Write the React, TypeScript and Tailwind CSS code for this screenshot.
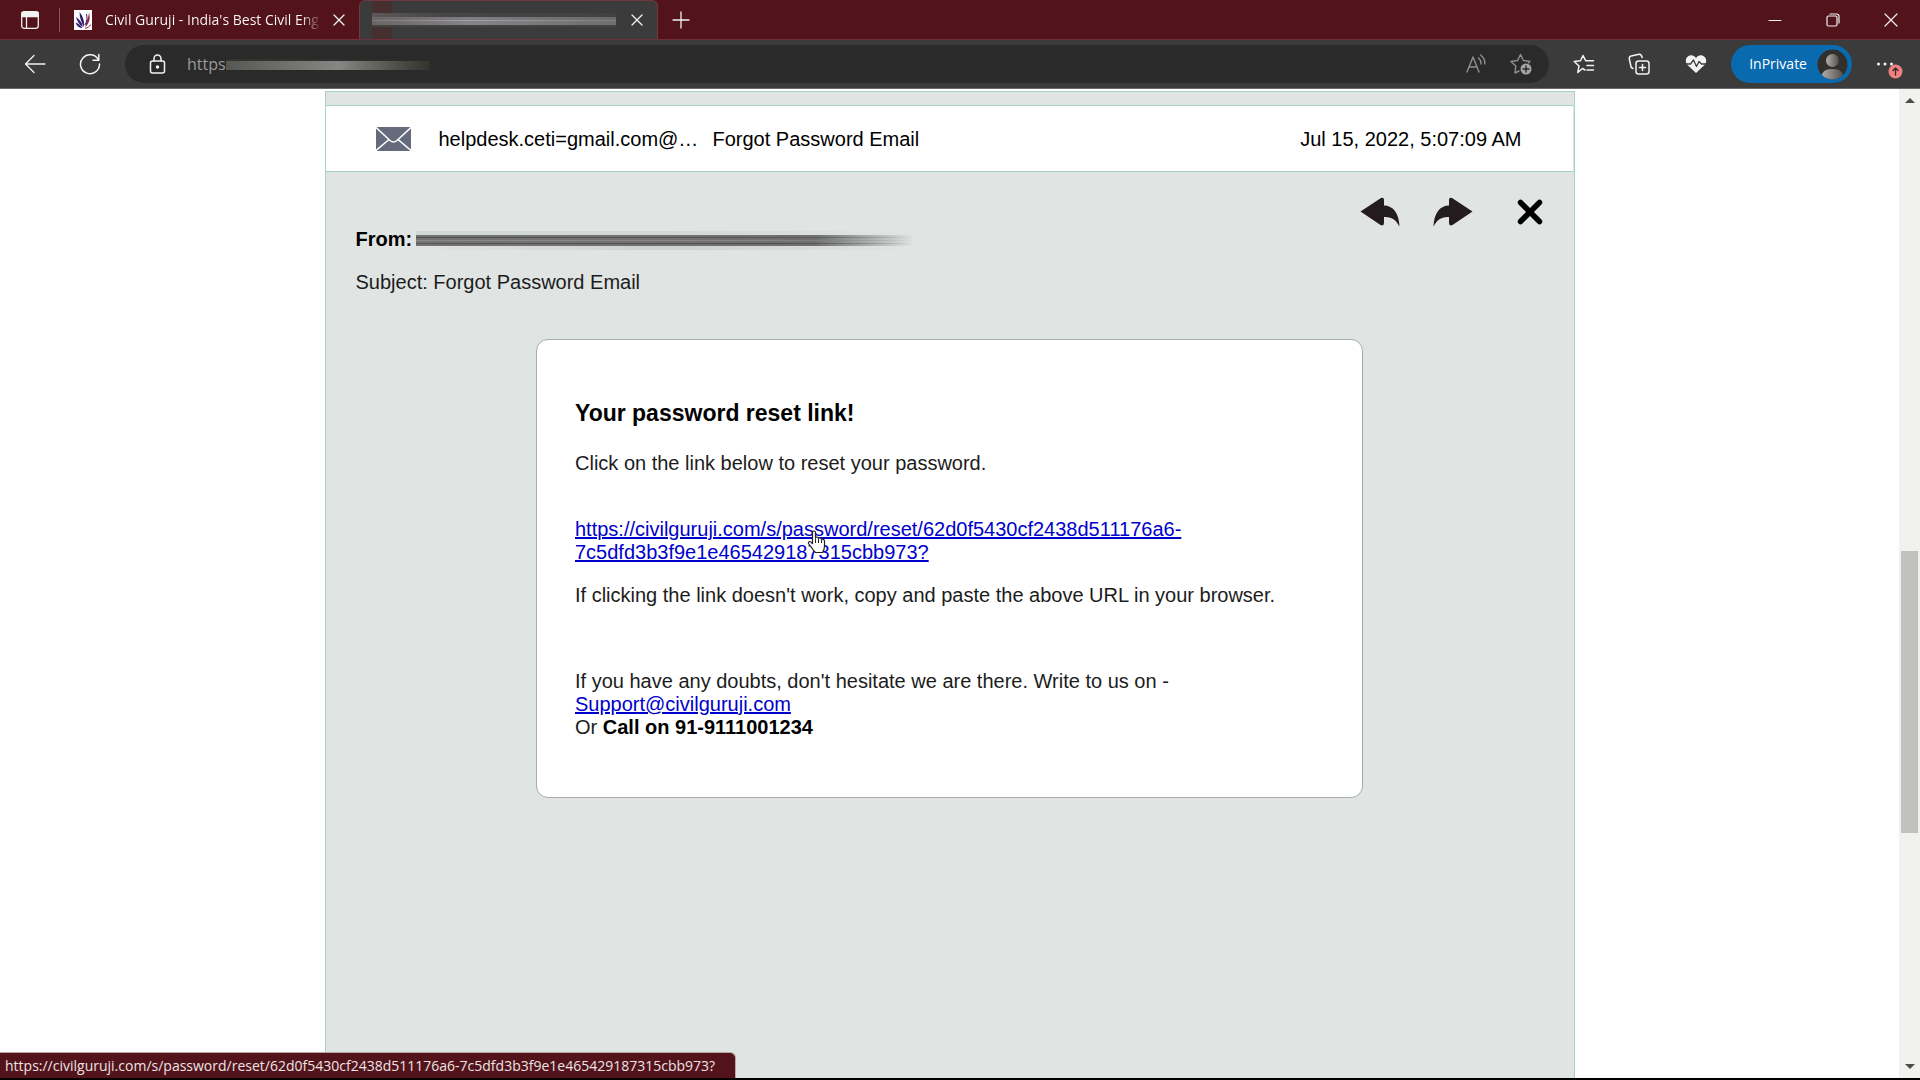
import type { ReactNode } from "react";

const RESET_URL =
  "https://civilguruji.com/s/password/reset/62d0f5430cf2438d511176a6-7c5dfd3b3f9e1e465429187315cbb973?";

type IconProps = {
  w?: number;
  h?: number;
  stroke?: string;
  width?: number;
  children: ReactNode;
};

function Icon({ w = 20, h = 20, stroke = "#f2f2f2", width = 1.3, children }: IconProps) {
  return (
    <svg
      width={w}
      height={h}
      viewBox={`0 0 ${w} ${h}`}
      fill="none"
      stroke={stroke}
      strokeWidth={width}
      strokeLinecap="round"
      strokeLinejoin="round"
      className="shrink-0"
      aria-hidden="true"
    >
      {children}
    </svg>
  );
}

function CloseIcon() {
  return (
    <Icon w={12} h={12}>
      <path d="M1 1L11 11M11 1L1 11" />
    </Icon>
  );
}

function TabBar() {
  return (
    <div className="flex h-[39px] items-stretch bg-[#53131b] text-white">
      <div className="flex min-w-0 items-center pl-5">
        <button aria-label="Tab actions">
          <Icon>
            <rect x="1.7" y="1.7" width="16.6" height="16.6" rx="2.5" />
            <path d="M2 2.5H18V6.5H2Z" fill="#f2f2f2" />
            <path d="M6.5 7V18" />
          </Icon>
        </button>
        <span className="ml-[19px] h-6 w-px bg-[#8b5a60]" />
        <svg width="18" height="20" viewBox="0 0 18 20" className="ml-3.5 shrink-0" fill="none" aria-hidden="true">
          <path d="M0 0H18V20H0Z" fill="#fff" />
          <path d="M5.500 2C8.500 6 10.500 10 10 17C7.500 12 5.500 8 5.500 2Z" fill="#2b1c66" />
          <path d="M2 7C5 9 8 12 9 17C5 15 3 11 2 7Z" fill="#3a1d74" />
          <path d="M1.500 12.500C4 13.500 6.500 15 8.500 18C5 18 2.500 16 1.500 12.500Z" fill="#3a1d74" />
          <path d="M15 2.500C16.500 8 15.500 13 11.500 17C11.500 12 14.500 9 15 2.500Z" fill="#8c2340" />
          <path d="M12.500 4C13.500 8 13 12 10.800 15" stroke="#49206e" strokeWidth="1" />
          <path d="M11 18.300C13.500 18 15.500 17 16.500 14.500" stroke="#8c2340" strokeWidth="1" />
        </svg>
        <span className="ml-[13px] w-[228px] bg-linear-to-r from-white from-86% to-transparent to-95% bg-clip-text text-sm whitespace-nowrap text-transparent">
          Civil Guruji - India's Best Civil Eng
        </span>
        <button aria-label="Close tab">
          <CloseIcon />
        </button>
      </div>

      <div className="ml-3.5 flex w-[299px] items-center rounded-t-md border-x border-t border-[#713840] bg-[#3b3b3b] pl-3">
        <span className="h-full w-5 bg-[#452f31]" />
        <span className="-ml-5 flex w-[244px] flex-col">
          <span className="h-1 bg-linear-to-r from-[#5c5759] via-[#474546] via-30% to-[#414141]" />
          <span className="h-[3px] bg-linear-to-r from-[#6a6566] via-[#7f7e82] via-40% to-[#6a6a69]" />
          <span className="h-px bg-linear-to-r from-[#7d797a] via-[#a3a2a5] via-40% to-[#80807f]" />
          <span className="h-1 bg-linear-to-r from-[#6a6566] via-[#858488] via-40% to-[#6e6e6d]" />
          <span className="h-0.5 bg-[#444241]" />
        </span>
        <button aria-label="Close tab" className="ml-[15px]">
          <CloseIcon />
        </button>
      </div>
      <button aria-label="New tab" className="ml-3.5">
        <Icon w={18} h={18}>
          <path d="M9 1V17M1 9H17" />
        </Icon>
      </button>

      <div className="ml-auto flex items-center gap-11 pr-[22px]">
        <button aria-label="Minimise">
          <Icon w={14} h={14} width={1}>
            <path d="M1 7.5H13" />
          </Icon>
        </button>
        <button aria-label="Restore">
          <Icon w={14} h={14} width={1.2}>
            <rect x="1" y="3" width="10" height="10" rx="1.5" />
            <path d="M4 1H10.500Q13 1 13 3.500V10" />
          </Icon>
        </button>
        <button aria-label="Close window">
          <Icon w={14} h={14} width={1.2}>
            <path d="M1 1L13 13M13 1L1 13" />
          </Icon>
        </button>
      </div>
    </div>
  );
}

function Toolbar() {
  return (
    <div className="flex h-[50px] items-center border-t border-b border-t-[#6d3038] border-b-[#6a6a6a] bg-[#3b3b3b] pr-[17px] pl-6">
      <button aria-label="Back">
        <Icon w={22}>
          <path d="M21 10H1.500M10 1.500L1.500 10L10 18.500" />
        </Icon>
      </button>
      <button aria-label="Refresh" className="ml-[33px]">
        <Icon w={22} h={22} width={1.5}>
          <path d="M19.500 7A9.500 9.500 0 1 0 20.500 11" />
          <path d="M19.800 1.500V7.200H14" />
        </Icon>
      </button>

      <div className="ml-6 flex h-[38px] flex-1 items-center rounded-full bg-[#2a2a2a] pr-[17px] pl-6">
        <Icon w={17} h={20} width={1.5}>
          <rect x="1.500" y="7" width="14" height="12" rx="2" />
          <path d="M5 7V4.500A3.500 3.500 0 0 1 12 4.500V7" />
          <circle cx="8.500" cy="13" r="1" fill="#f2f2f2" />
        </Icon>
        <input
          aria-label="Address"
          defaultValue="https"
          className="ml-[21px] w-[39px] bg-transparent text-base text-[#9a9a9a] outline-none"
        />
        <span className="flex w-[204px] flex-col">
          <span className="h-0.5 bg-linear-to-r from-[#34342f] to-[#2a2a2a]" />
          <span className="h-[9px] bg-linear-to-r from-[#575754] via-[#868784] via-55% to-[#33322d]" />
        </span>
        <button aria-label="Read aloud" className="ml-auto">
          <Icon w={20} stroke="#8f8f8f" width={1.4}>
            <path d="M1 18L7 3L13 18M3 13H11" />
            <path d="M12.500 4A7 7 0 0 1 15 10M14.500 1A10 10 0 0 1 18.800 10" />
          </Icon>
        </button>
        <button aria-label="Add to favourites" className="ml-6">
          <Icon w={22} h={22} stroke="#8f8f8f" width={1.4}>
            <path d="M9 18L5 20L5.800 13L1 8.500L7.500 7.500L10.500 1.500L13.500 7.500L20 8.500L18.500 10" />
            <circle cx="16" cy="16" r="5.500" fill="#a5a5a5" stroke="none" />
            <path d="M16 13V19M13 16H19" stroke="#2a2a2a" />
          </Icon>
        </button>
      </div>

      <button aria-label="Favourites" className="ml-6">
        <Icon w={22} width={1.5}>
          <path d="M12 16L9.500 14.500L4.800 18.500L6 12L1.200 7.500L7.500 6.800L10 1.500L12.800 6.800H20.500" />
          <path d="M14 11.500H20.500M14 16H20.500" />
        </Icon>
      </button>
      <button aria-label="Collections" className="ml-[33px]">
        <Icon w={22} h={22} width={1.5}>
          <rect x="8" y="8" width="13" height="13" rx="2.500" />
          <path d="M14.500 11.500V17.500M11.500 14.500H17.500" />
          <path d="M5 15.500L3.200 14.500L1.300 6Q1 3.500 3.200 2.900L11 1.200Q13.500 1 14.200 4.500" />
        </Icon>
      </button>
      <button aria-label="Browser essentials" className="ml-[35px]">
        <Icon w={22}>
          <path
            d="M11 19L2 10.500C-0.500 7 1 2 5.500 1.300C8 1.100 10 2.300 11 4C12 2.300 14 1.100 16.500 1.300C21 2 22.500 7 20 10.500Z"
            fill="#f2f2f2"
            stroke="none"
          />
          <path d="M0 10H5.500L8.500 6L11.500 12.500L14 7.500L16.500 10H22" stroke="#3b3b3b" />
        </Icon>
      </button>
      <button className="ml-6 flex h-[38px] items-center rounded-full bg-[#0a6ab0] pr-1 pl-[18px] text-sm text-white">
        InPrivate
        <svg width="31" height="31" viewBox="0 0 31 31" className="ml-2.5" aria-hidden="true">
          <defs>
            <linearGradient id="avatar">
              <stop offset="0" stopColor="#b5b0ad" />
              <stop offset="1" stopColor="#4e4c4b" />
            </linearGradient>
            <clipPath id="avatarClip">
              <circle cx="15.500" cy="15.500" r="15" />
            </clipPath>
          </defs>
          <circle cx="15.500" cy="15.500" r="15" fill="#32302d" />
          <g clipPath="url(#avatarClip)" fill="url(#avatar)">
            <circle cx="15.500" cy="11.500" r="6.500" />
            <path d="M4 31C4 23 8 20 15.500 20S27 23 27 31Z" />
          </g>
        </svg>
      </button>
      <button aria-label="Settings and more" className="ml-6">
        <Icon w={27} h={32}>
          <g fill="#f2f2f2" stroke="none">
            <circle cx="2.500" cy="16" r="1.500" />
            <circle cx="9" cy="16" r="1.500" />
            <circle cx="15.500" cy="16" r="1.500" />
          </g>
          <circle cx="19.500" cy="23.500" r="7" fill="#ee8181" stroke="none" />
          <path d="M19.500 27V20M17 22.500L19.500 20L22 22.500" stroke="#3b2a2a" />
        </Icon>
      </button>
    </div>
  );
}

function MailRow() {
  return (
    <div className="mr-px flex h-[67px] items-center border-y border-[#a5d1cb] bg-white pt-px pr-[51px] pl-[50px]">
      <svg width="35" height="24" viewBox="0 0 35 24" className="shrink-0" aria-hidden="true">
        <rect width="35" height="24" rx="1.500" fill="#666a7d" />
        <path
          d="M0 0.500L14 13.500Q17.500 16.500 21 13.500L35 0.500M0 23.500L13 12.500M35 23.500L22 12.500"
          stroke="#fff"
          strokeWidth="1.600"
          fill="none"
        />
      </svg>
      <span className="ml-7 w-[274px] whitespace-nowrap">helpdesk.ceti=gmail.com@…</span>
      <span>Forgot Password Email</span>
      <time className="ml-auto">Jul 15, 2022, 5:07:09 AM</time>
    </div>
  );
}

// Opened message: actions on the right, sender and subject on the left
function MailHeader() {
  return (
    <div className="flex items-start justify-between pt-[25px] pr-[31px] pl-[30px]">
      <div className="pt-[31px]">
        <p className="flex items-center gap-1">
          <strong>From:</strong>
          <span className="flex w-[498px] flex-col pt-0.5">
            <span className="h-1 bg-linear-to-r from-[#d2d8d6] via-[#d3d7d6] to-transparent" />
            <span className="flex h-[11px] flex-col justify-between bg-linear-to-r from-[#747474] via-[#6f6f70] via-80% to-transparent py-0.5">
              <span className="h-px bg-linear-to-r from-[#4d4d4e] via-[#555] via-70% to-transparent" />
              <span className="h-px bg-linear-to-r from-[#8a8a8a] via-[#858585] via-70% to-transparent" />
              <span className="h-px bg-linear-to-r from-[#555] via-[#4d4d4e] via-70% to-transparent" />
            </span>
            <span className="h-1 bg-linear-to-r from-transparent via-[#ccd1d1] to-transparent" />
          </span>
        </p>
        <p className="mt-5 text-[#1c1c1c]">Subject: Forgot Password Email</p>
      </div>
      <div className="flex items-center">
        <button aria-label="Reply">
          <svg width="40" height="30" viewBox="0 0 40 30" aria-hidden="true">
            <path
              d="M0.500 14.500L21 1Q24 0 24 3V8.500C33 8.500 39 16 39.500 29.500C36 23 32 19.500 24 20V26Q24 29.500 20.500 28Z"
              fill="#231b1d"
            />
          </svg>
        </button>
        <button aria-label="Forward" className="ml-[33px]">
          <svg width="40" height="30" viewBox="0 0 40 30" aria-hidden="true">
            <path
              d="M39.500 14.500L19 1Q16 0 16 3V8.500C7 8.500 1 16 0.500 29.500C4 23 8 19.500 16 20V26Q16 29.500 19.500 28Z"
              fill="#231b1d"
            />
          </svg>
        </button>
        <button aria-label="Close message" className="ml-11">
          <svg width="26" height="26" viewBox="0 0 26 26" aria-hidden="true">
            <path d="M3.500 3.500L22.500 22.500M22.500 3.500L3.500 22.500" stroke="#000" strokeWidth="5.500" strokeLinecap="round" />
          </svg>
        </button>
      </div>
    </div>
  );
}

function HandCursor() {
  return (
    <svg width="19" height="24" viewBox="0 0 19 24" className="absolute top-3 left-[232px]" aria-hidden="true">
      <path
        d="M5.500 13V2.500Q5.500 1 7 1T8.500 2.500V8.500Q8.500 7 10 7T11.500 8.800Q11.500 7.800 13 7.800T14.500 9.800Q14.800 9 16 9.200T17.500 11V16Q17.500 20 15.500 22.500H8.500Q6 20 4.500 17.500L1.500 13.500Q1 11.500 3 11.500Q4.500 12 5.500 14Z"
        fill="#fff"
        stroke="#222"
        strokeWidth="1.200"
      />
      <path d="M8.500 8.500V13M11.500 9V13M14.500 10V13" stroke="#222" strokeWidth="1" />
    </svg>
  );
}

function ResetCard() {
  return (
    <article className="mx-auto mt-[45px] w-full max-w-[827px] rounded-xl border border-[#a9abab] bg-white px-[38px] pt-[60px] pb-[58px] text-[#1c1c1c]">
      <h1 className="text-[23px] leading-[27px] font-bold text-black">Your password reset link!</h1>
      <p className="mt-[25px]">Click on the link below to reset your password.</p>
      <p className="relative mt-[43px]">
        <a href={RESET_URL} className="text-[#0000cc] underline">
          https://civilguruji.com/s/password/reset/62d0f5430cf2438d511176a6-
          <br />
          7c5dfd3b3f9e1e465429187315cbb973?
        </a>
        <HandCursor />
      </p>
      <p className="mt-5">If clicking the link doesn't work, copy and paste the above URL in your browser.</p>
      <p className="mt-[63px]">
        If you have any doubts, don't hesitate we are there. Write to us on -
        <br />
        <a href="mailto:Support@civilguruji.com" className="text-[#0000cc] underline">
          Support@civilguruji.com
        </a>
        <br />
        Or <strong className="text-black">Call on 91-9111001234</strong>
      </p>
    </article>
  );
}

function ScrollBar() {
  return (
    <div className="flex w-[21px] shrink-0 flex-col items-center bg-[#f1f1ee] py-2">
      <svg width="10" height="6" viewBox="0 0 10 6" aria-hidden="true">
        <path d="M0 6L5 1L10 6Z" fill="#4c4c49" />
      </svg>
      <div className="flex w-full flex-1 flex-col px-0.5">
        <span className="flex-[448]" />
        <span className="flex-[282] bg-[#c1c1bd]" />
        <span className="flex-[231]" />
      </div>
      <svg width="10" height="6" viewBox="0 0 10 6" aria-hidden="true">
        <path d="M0 0L5 5L10 0Z" fill="#4c4c49" />
      </svg>
    </div>
  );
}

export default function App() {
  return (
    <div className="relative flex h-screen flex-col overflow-hidden border-b-2 border-black bg-white font-['Open_Sans',sans-serif]">
      <TabBar />
      <Toolbar />
      <div className="flex min-h-0 flex-1">
        <main className="flex min-w-0 flex-1 justify-center overflow-hidden pt-0.5 font-['Liberation_Sans',Arial,sans-serif] text-xl leading-[23px] text-black">
          <section className="w-full max-w-[1250px] border-x border-t border-[#a5d1cb] bg-[#e0e4e3] pt-[13px]">
            <MailRow />
            <MailHeader />
            <ResetCard />
          </section>
        </main>
        <ScrollBar />
      </div>
      <div className="absolute bottom-0 left-0 rounded-tr-md border-t border-r border-[#b9a6a8] bg-[#53131b] pr-5 pl-[5px] text-sm leading-[25px] text-[#ece4e5]">
        {RESET_URL}
      </div>
    </div>
  );
}
